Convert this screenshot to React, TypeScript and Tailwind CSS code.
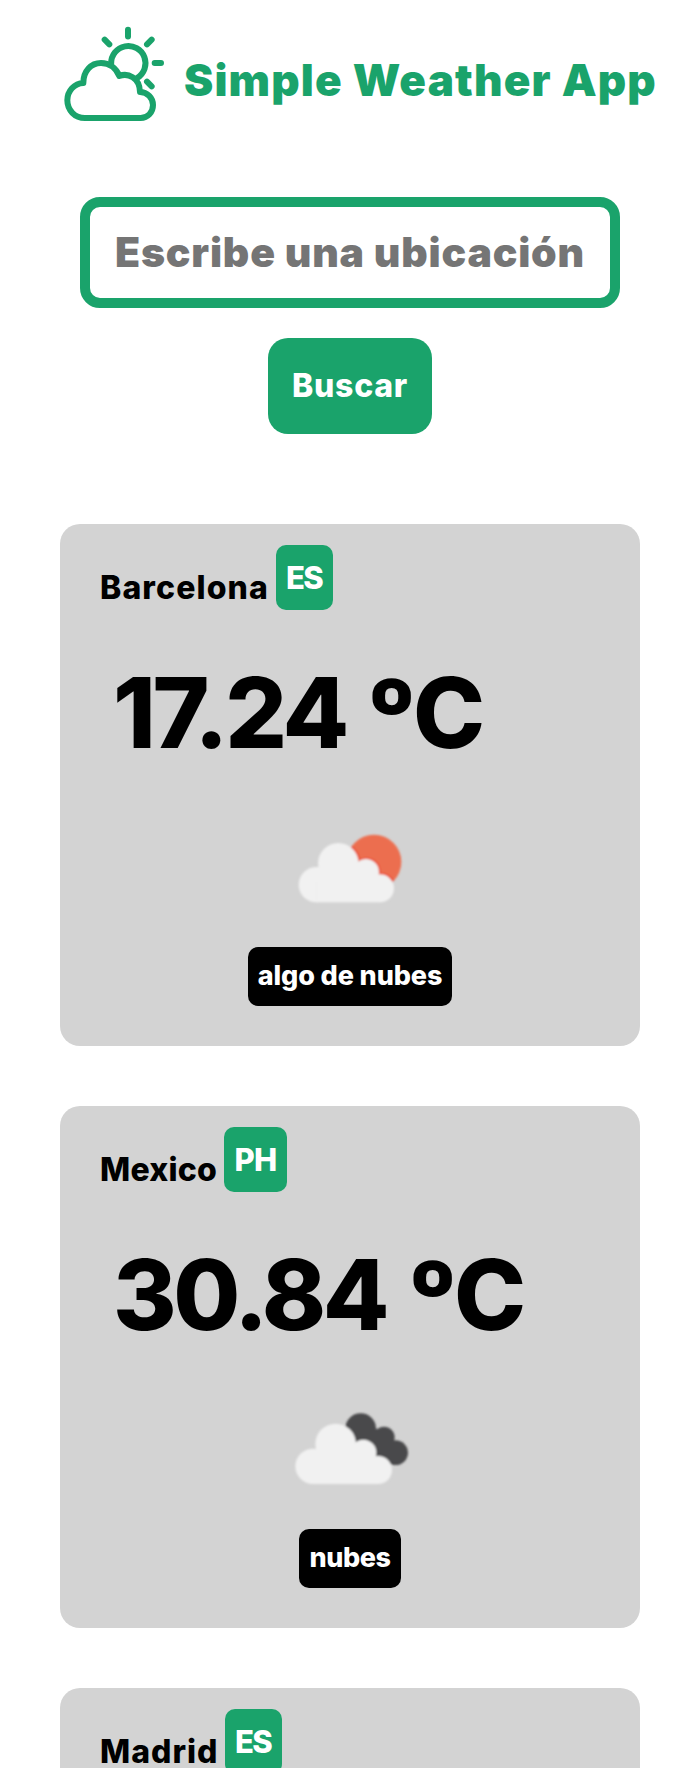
type Reading = {
  degrees: string;
  degreesClass: string;
  sky: "sun" | "clouds";
  description: string;
  descriptionClass: string;
};

type City = {
  name: string;
  nameClass: string;
  country: string;
  badgeClass: string;
  reading?: Reading;
};

const cities: City[] = [
  {
    name: "Barcelona",
    nameClass: "w-[176px] tracking-[1.11px]",
    country: "ES",
    badgeClass: "w-[57px] tracking-[-1.6px] pr-[1px]",
    reading: {
      degrees: "17.24",
      degreesClass: "w-[254px] tracking-[-3.2px]",
      sky: "sun",
      description: "algo de nubes",
      descriptionClass: "w-[204px] tracking-[-0.1px]",
    },
  },
  {
    name: "Mexico",
    nameClass: "w-[124px] tracking-[0.22px]",
    country: "PH",
    badgeClass: "w-[63px] tracking-[-0.6px]",
    reading: {
      degrees: "30.84",
      degreesClass: "w-[295px] tracking-[-3.4px]",
      sky: "clouds",
      description: "nubes",
      descriptionClass: "w-[102px] tracking-[-0.4px]",
    },
  },
  {
    name: "Madrid",
    nameClass: "w-[125px] tracking-[0.99px]",
    country: "ES",
    badgeClass: "w-[57px] tracking-[-1.6px] pr-[1px]",
  },
];

function Logo() {
  return (
    <svg
      className="h-[104px] w-[110px] shrink-0"
      viewBox="60 36 330 312"
      fill="none"
      stroke="#1aa36b"
      strokeWidth="18"
      strokeLinecap="round"
      strokeLinejoin="round"
    >
      <path d="M264 59.500V79.500M344 159H363M194 89L208 103M335 89L321 103M321 215L335 229" />
      <path d="M213.500 161A51.500 51.500 0 1 1 291 204" />
      <path d="M130 219C130 183 153 159 183 159C208 159 228 174 238 198C263 188 299 202 300 246C322 246 339 264 339 285C339 307 323 324 302 324H135C104 324 82 300 82 271C82 243 103 220 130 219Z" />
    </svg>
  );
}

function SunCloud() {
  return (
    <svg className="h-[85px] w-[130px]" viewBox="0 0 390 255">
      <defs>
        <filter id="soft-sun" x="-5%" y="-5%" width="110%" height="110%">
          <feGaussianBlur stdDeviation="2.5" />
        </filter>
        <clipPath id="sun-disc">
          <circle cx="267" cy="111" r="82" />
        </clipPath>
      </defs>
      <g filter="url(#soft-sun)">
        <circle cx="267" cy="111" r="82" fill="#ec6e4f" />
        <g clipPath="url(#sun-disc)" fill="#e9452f">
          <circle cx="162" cy="114" r="64" />
          <circle cx="245" cy="139" r="41" />
          <circle cx="287" cy="189" r="45" />
        </g>
        <g fill="#f1f1f1">
          <circle cx="94" cy="179" r="53" />
          <circle cx="160" cy="115" r="61" />
          <circle cx="243" cy="141" r="39" />
          <circle cx="285" cy="190" r="42" />
          <path d="M94 232V150L160 115L243 141L285 170V232Z" />
        </g>
      </g>
    </svg>
  );
}

function DarkClouds() {
  return (
    <svg className="h-[85px] w-[130px]" viewBox="0 6 390 255">
      <defs>
        <filter id="soft-clouds" x="-5%" y="-5%" width="110%" height="110%">
          <feGaussianBlur stdDeviation="2.5" />
        </filter>
      </defs>
      <g filter="url(#soft-clouds)">
        <g fill="#4a4a4c">
          <circle cx="227" cy="71" r="46" />
          <circle cx="297" cy="97" r="32" />
          <circle cx="332" cy="143" r="37" />
          <path d="M227 50L276 72L297 90L328 108L332 143L325 180L270 160L200 110Z" />
        </g>
        <g fill="#f1f1f1">
          <circle cx="84" cy="184" r="53" />
          <circle cx="152" cy="117" r="61" />
          <circle cx="235" cy="143" r="39" />
          <circle cx="279" cy="195" r="42" />
          <path d="M84 237V155L152 117L235 143L279 175V237Z" />
        </g>
      </g>
    </svg>
  );
}

function CityReading({ reading }: { reading: Reading }) {
  return (
    <>
      <p className="mt-[31px] flex pl-[53px] text-[97px] leading-[144px] whitespace-pre text-black">
        <span className={`shrink-0 ${reading.degreesClass}`}>{reading.degrees} </span>
        <span className="w-[46px] origin-[50%_39%] scale-y-90 font-black [-webkit-text-stroke:4px_black]">º</span>
        <span>C</span>
      </p>
      <div className="mt-10 flex justify-center">{reading.sky === "sun" ? <SunCloud /> : <DarkClouds />}</div>
      <p
        className={`mt-[37px] flex h-[59px] items-center justify-center self-center rounded-[10px] bg-black text-[27px] whitespace-nowrap text-white ${reading.descriptionClass}`}
      >
        {reading.description}
      </p>
    </>
  );
}

function CityCard({ city }: { city: City }) {
  return (
    <article className="flex h-[522px] w-[580px] shrink-0 flex-col rounded-[20px] bg-[#d3d3d3] pt-[21px]">
      <div className="flex items-start pl-10 text-[32px] leading-[41px]">
        <h2 className={`mt-[22px] shrink-0 whitespace-nowrap text-black ${city.nameClass}`}>{city.name}</h2>
        <span
          className={`flex h-[65px] items-center justify-center rounded-[10px] bg-[#1aa36b] text-[31px] text-white ${city.badgeClass}`}
        >
          {city.country}
        </span>
      </div>
      {city.reading && <CityReading reading={city.reading} />}
    </article>
  );
}

export default function App() {
  return (
    <div className="h-[1768px] overflow-hidden bg-white font-['Inter',sans-serif] font-extrabold">
      <header className="flex items-start gap-[14px] pt-[22px] pl-[60px]">
        <Logo />
        <h1 className="mt-[25px] text-[44px] leading-[66px] font-black tracking-[1.15px] whitespace-nowrap text-[#1aa36b]">
          Simple Weather App
        </h1>
      </header>
      <form className="mt-[71px] ml-20 flex w-[540px] flex-col items-center gap-[30px]">
        <input
          className="h-[111px] w-full rounded-[20px] border-10 border-[#1aa36b] bg-white px-[25px] pb-[2px] text-[41px] font-black tracking-[0.8px] outline-none placeholder:text-[#757575]"
          placeholder="Escribe una ubicación"
        />
        <button
          type="button"
          className="h-24 w-[164px] rounded-[20px] bg-[#1aa36b] text-[32px] tracking-[0.7px] text-white"
        >
          Buscar
        </button>
      </form>
      <main className="mt-[90px] ml-[60px] flex flex-col gap-[60px]">
        {cities.map((city) => (
          <CityCard key={city.name} city={city} />
        ))}
      </main>
    </div>
  );
}
